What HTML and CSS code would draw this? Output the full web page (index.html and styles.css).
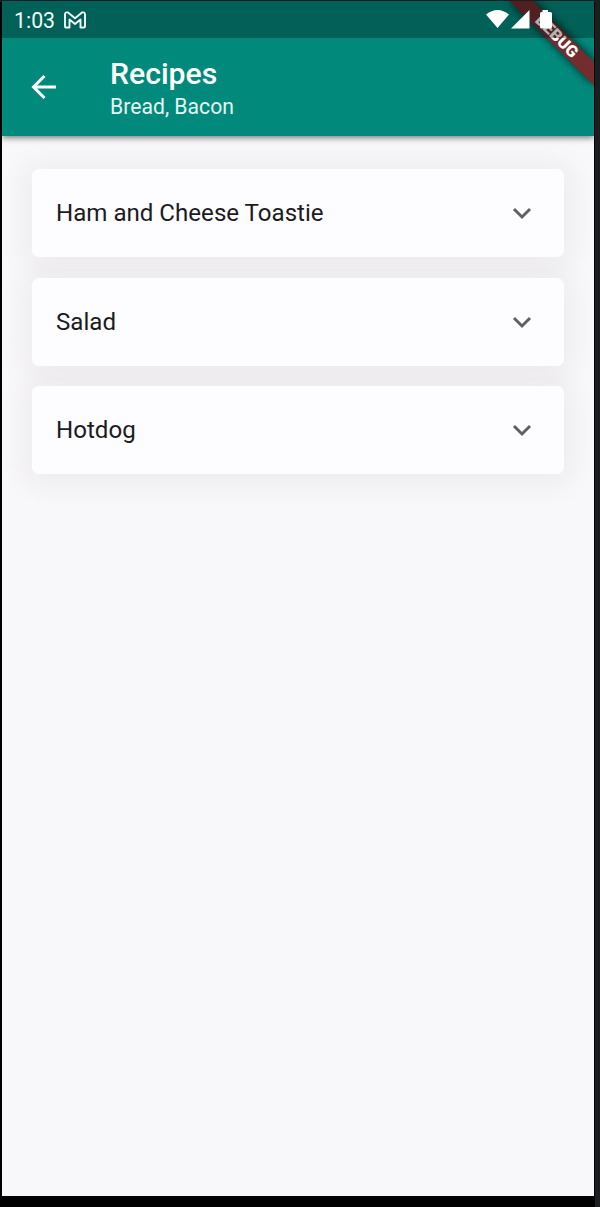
FILE: index.html
```
<!DOCTYPE html>
<html lang="en">
<head>
<meta charset="utf-8">
<title>Recipes</title>
<link rel="stylesheet" href="styles.css">
</head>
<body>
<div class="screen">
  <header class="header">
    <svg class="banner" width="96" height="100" viewBox="0 0 96 100">
      <path class="banner-shade" d="M11 0H37L96 59V85Z"/>
      <path class="banner-band" d="M11.500 0H35L96 61V84.500Z"/>
      <text class="banner-text" transform="translate(59 35) rotate(45)" x="0" y="5.600" text-anchor="middle" textLength="53" lengthAdjust="spacingAndGlyphs">DEBUG</text>
    </svg>
    <div class="status">
      <span class="clock">1:03</span>
      <svg class="mail" width="22" height="18" viewBox="0 0 22 18"><path d="M1 3Q1.500 .8 4 1.500L11 7.200L18 1.500Q20.500 .8 21 3V15.500Q21 16.500 20 16.500H16.500V8.500L11 13L5.500 8.500V16.500H2Q1 16.500 1 15.500Z"/></svg>
      <svg class="signals" width="68" height="22" viewBox="0 0 68 22"><path d="M0 5.500Q11.500-3.500 23 5.500L11.500 19ZM25 19.500L43.500 1V19.500ZM54 3H56.500V1H62V3H64.500Q66 3 66 4.500V18Q66 19.500 64.500 19.500H55.500Q54 19.500 54 18V4.500Q54 3 55.500 3Z"/></svg>
    </div>
    <div class="appbar">
      <svg class="back" width="26" height="26" viewBox="0 0 26 26"><path d="M13.500 2L2.500 13L13.500 24M2.500 13H25"/></svg>
      <div>
        <h1 class="title">Recipes</h1>
        <p class="subtitle">Bread, Bacon</p>
      </div>
    </div>
  </header>
  <main class="list">
    <div class="card"><span>Ham and Cheese Toastie</span><svg class="chevron" width="20" height="14" viewBox="0 0 20 14"><path d="M2 3L10 11L18 3"/></svg></div>
    <div class="card"><span>Salad</span><svg class="chevron" width="20" height="14" viewBox="0 0 20 14"><path d="M2 3L10 11L18 3"/></svg></div>
    <div class="card"><span>Hotdog</span><svg class="chevron" width="20" height="14" viewBox="0 0 20 14"><path d="M2 3L10 11L18 3"/></svg></div>
  </main>
</div>
</body>
</html>
```
FILE: styles.css
```
* { box-sizing: border-box; }
body {
  margin: 0;
  height: 1207px;
  padding: 1px 6px 0 2px;
  overflow: hidden;
  background: linear-gradient(#1b1e20, #1b1e20) right / 5px 100% no-repeat,
    linear-gradient(#1b1e20, #1b1e20) top / 100% 2px no-repeat, #000;
  font-family: Roboto, sans-serif;
}
.screen {
  display: flex;
  flex-direction: column;
  height: 1195px;
  width: 592px;
  overflow: hidden;
  background: #f8f7fa;
}
.header {
  position: relative;
  z-index: 1;
  flex: none;
  height: 135px;
  background: #018a7c;
  box-shadow: 0 2px 6px rgba(0, 0, 0, .5);
}
.status {
  position: relative;
  z-index: 1;
  display: flex;
  align-items: center;
  height: 37px;
  padding: 0 42px 0 12px;
  background: linear-gradient(rgba(0, 0, 0, .3), rgba(0, 0, 0, .3));
  color: #f2fbfa;
}
.clock { width: 49.500px; font-size: 21.300px; line-height: 37px; padding-top: 2px; }
.mail { fill: none; stroke: #f2fbfa; stroke-width: 1.900; stroke-linejoin: round; }
.signals { margin-left: auto; margin-right: -2px; fill: #fff; overflow: visible; }
.appbar { display: flex; align-items: center; height: 98px; padding-left: 29px; color: #fff; }
.back { margin-right: 53px; fill: none; stroke: #fff; stroke-width: 3; }
.title { margin: 2px 0 0; font-size: 30.200px; line-height: 35px; font-weight: 500; }
.subtitle { margin: 3px 0 0; font-size: 21.200px; line-height: 26px; color: #e4f5f2; }
.banner { position: absolute; top: 0; right: 0; }
.banner-shade { fill: #000; opacity: .65; filter: blur(4px); }
.banner-band { fill: #732d2f; }
.banner-text { fill: #fff; font: 900 16px Roboto, sans-serif; }
.list {
  position: relative;
  z-index: 0;
  display: flex;
  flex-direction: column;
  gap: 20.800px;
  padding: 33px 30px;
}
.card {
  position: relative;
  display: flex;
  align-items: center;
  justify-content: space-between;
  height: 87.900px;
  padding: 0 32.500px 0 24px;
  border-radius: 7px;
  background: #fdfcfe;
  color: #1c1b1f;
  font-size: 24.100px;
}
.card::before {
  content: "";
  position: absolute;
  inset: 0;
  z-index: -1;
  border-radius: 7px;
  box-shadow: 0 3px 28px 8px rgba(60, 30, 0, .055);
}
.chevron { fill: none; stroke: #626064; stroke-width: 3; }
```
